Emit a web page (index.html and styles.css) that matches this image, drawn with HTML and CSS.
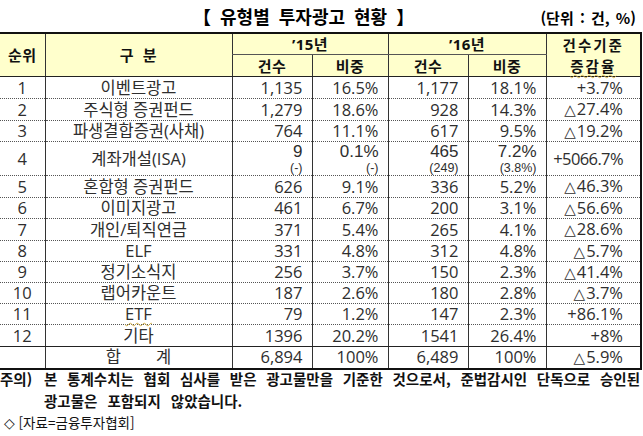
FILE: index.html
```html
<!DOCTYPE html>
<html lang="ko">
<head>
<meta charset="utf-8">
<title>유형별 투자광고 현황</title>
<link rel="stylesheet" href="styles.css">
</head>
<body>
<div class="page">
  <div class="title-bar">
    <div class="title">【 유형별 투자광고 현황 】</div>
    <div class="unit">(단위 : 건, %)</div>
  </div>
  <table class="stats">
    <colgroup>
      <col class="c-rank"><col class="c-name"><col class="c-n15"><col class="c-p15"><col class="c-n16"><col class="c-p16"><col class="c-chg">
    </colgroup>
    <thead>
      <tr class="h1">
        <th rowspan="2" class="first">순위</th>
        <th rowspan="2" class="gname">구 분</th>
        <th colspan="2" class="grp">’15년</th>
        <th colspan="2" class="grp">’16년</th>
        <th rowspan="2" class="last chg-h">건수기준<br><span class="squiggle">증감율</span></th>
      </tr>
      <tr class="h2">
        <th>건수</th><th>비중</th><th>건수</th><th>비중</th>
      </tr>
    </thead>
    <tbody>
      <tr class="r22"><td class="first">1</td><td class="name">이벤트광고</td><td>1,135</td><td>16.5%</td><td>1,177</td><td>18.1%</td><td class="last">+3.7%</td></tr>
      <tr class="r22"><td class="first">2</td><td class="name">주식형 증권펀드</td><td>1,279</td><td>18.6%</td><td>928</td><td>14.3%</td><td class="last"><span class="tri">△</span>27.4%</td></tr>
      <tr class="r21"><td class="first">3</td><td class="name">파생결합증권(사채)</td><td>764</td><td>11.1%</td><td>617</td><td>9.5%</td><td class="last"><span class="tri">△</span>19.2%</td></tr>
      <tr class="tall"><td class="first">4</td><td class="name">계좌개설(ISA)</td>
        <td class="stack"><span class="main">9</span><span class="sub">(-)</span></td>
        <td class="stack"><span class="main">0.1%</span><span class="sub">(-)</span></td>
        <td class="stack"><span class="main">465</span><span class="sub">(249)</span></td>
        <td class="stack"><span class="main">7.2%</span><span class="sub">(3.8%)</span></td>
        <td class="last tight">+5066.7%</td></tr>
      <tr class="r22"><td class="first">5</td><td class="name">혼합형 증권펀드</td><td>626</td><td>9.1%</td><td>336</td><td>5.2%</td><td class="last"><span class="tri">△</span>46.3%</td></tr>
      <tr class="r21"><td class="first">6</td><td class="name">이미지광고</td><td>461</td><td>6.7%</td><td>200</td><td>3.1%</td><td class="last"><span class="tri">△</span>56.6%</td></tr>
      <tr class="r22"><td class="first">7</td><td class="name">개인/퇴직연금</td><td>371</td><td>5.4%</td><td>265</td><td>4.1%</td><td class="last"><span class="tri">△</span>28.6%</td></tr>
      <tr class="r21"><td class="first">8</td><td class="name">ELF</td><td>331</td><td>4.8%</td><td>312</td><td>4.8%</td><td class="last"><span class="tri">△</span>5.7%</td></tr>
      <tr class="r21"><td class="first">9</td><td class="name">정기소식지</td><td>256</td><td>3.7%</td><td>150</td><td>2.3%</td><td class="last"><span class="tri">△</span>41.4%</td></tr>
      <tr class="r21"><td class="first">10</td><td class="name">랩어카운트</td><td>187</td><td>2.6%</td><td>180</td><td>2.8%</td><td class="last"><span class="tri">△</span>3.7%</td></tr>
      <tr class="r21"><td class="first">11</td><td class="name"><span class="squiggle">ETF</span></td><td>79</td><td>1.2%</td><td>147</td><td>2.3%</td><td class="last">+86.1%</td></tr>
      <tr class="r22 pre-total"><td class="first">12</td><td class="name">기타</td><td>1396</td><td>20.2%</td><td>1541</td><td>26.4%</td><td class="last">+8%</td></tr>
      <tr class="r22 total"><td class="first"></td><td class="name"><span class="spread"><span>합</span><span>계</span></span></td><td>6,894</td><td>100%</td><td>6,489</td><td>100%</td><td class="last"><span class="tri">△</span>5.9%</td></tr>
    </tbody>
  </table>
  <div class="note">
    <div class="note-label">주의)</div>
    <div class="note-body">
      <span class="line1">본 통계수치는 협회 심사를 받은 광고물만을 기준한 것으로서, 준법감시인 단독으로 승인된</span>
      <span class="line2">광고물은 포함되지 않았습니다.</span>
    </div>
  </div>
  <div class="source"><span class="diamond">◇</span> [자료=금융투자협회]</div>
</div>
</body>
</html>
```

FILE: styles.css
```css
html, body {
  margin: 0;
  padding: 0;
  background: #ffffff;
}

.page {
  width: 643px;
  height: 436px;
  overflow: hidden;
  font-family: "Open Sans", "Noto Sans CJK KR", sans-serif;
  color: #000;
}

.title-bar {
  height: 32px;
  display: flex;
  align-items: center;
}

.title {
  padding-left: 193px;
  font-size: 18px;
  font-weight: 700;
  word-spacing: 4px;
  font-family: "Noto Sans CJK KR", sans-serif;
  line-height: 1;
}

.unit {
  margin-left: auto;
  padding-right: 7px;
  font-size: 15px;
  font-weight: 700;
  word-spacing: 2px;
  font-family: "Noto Sans CJK KR", sans-serif;
  line-height: 1;
  padding-top: 3px;
}

.stats {
  border-collapse: collapse;
  table-layout: fixed;
  width: 641px;
  border-top: 2px solid #111;
  border-bottom: 2px solid #111;
  border-right: 2px solid #111;
}

.c-rank { width: 45px; }
.c-name { width: 187px; }
.c-n15 { width: 80px; }
.c-p15 { width: 76px; }
.c-n16 { width: 80px; }
.c-p16 { width: 78px; }
.c-chg { width: 95px; }

.stats th {
  background: #ffffcc;
  font-weight: 700;
  font-size: 15px;
  letter-spacing: 0.5px;
  color: #111;
  padding: 0;
  line-height: 20px;
  text-align: center;
  border-left: 1px solid #333;
  border-bottom: 1px solid #222;
  font-family: "Noto Sans CJK KR", sans-serif;
}

.stats th.first { border-left: none; }

.stats tr.h1 { height: 21px; }
.stats tr.h2 { height: 22px; }

.stats th.grp { border-bottom: 1px solid #555; font-family: "Open Sans", "Noto Sans CJK KR", sans-serif; }

.stats th.gname { word-spacing: 4px; }

.stats th.chg-h {
  font-size: 14.5px;
  letter-spacing: 2px;
  line-height: 21px;
}

.stats td {
  font-size: 16.5px;
  color: #2e2e2e;
  padding: 0 9px 0 0;
  text-align: right;
  vertical-align: middle;
  line-height: 18px;
  border-left: 1px solid #333;
  border-bottom: 1px dotted #555;
  white-space: nowrap;
}

.stats td.first {
  border-left: none;
  text-align: center;
  padding: 0;
}

.stats td.name {
  text-align: center;
  padding: 0;
}

.stats td.last {
  padding-right: 17px;
}

.stats td.tight {
  letter-spacing: -0.6px;
}

.tri {
  font-family: "DejaVu Sans", sans-serif;
  font-size: 15px;
  margin-right: 1px;
}

.stats tr.r22 { height: 22px; }
.stats tr.r21 { height: 21px; }
.stats tr.tall { height: 34px; }
.stats tr.pre-total td { border-bottom: 1px solid #222; }
.stats tr.total td { border-bottom: 2px solid #111; }

.stats td.stack {
  font-family: "Liberation Sans", "Noto Sans CJK KR", sans-serif;
  font-size: 17px;
}

.stack .main {
  display: block;
  line-height: 19px;
}

.stack .sub {
  display: block;
  font-size: 12.5px;
  line-height: 14px;
}

.squiggle {
  text-decoration: underline wavy #d6b34a;
  text-decoration-thickness: 1px;
  text-underline-offset: 2px;
}

.spread {
  display: inline-flex;
  gap: 35px;
}

.note {
  display: flex;
  font-family: "Noto Sans CJK KR", sans-serif;
  font-weight: 700;
  font-size: 14.5px;
  line-height: 22px;
  color: #111;
  margin-top: -2px;
}

.note-label {
  width: 44px;
  flex: none;
  white-space: nowrap;
}

.note-body {
  width: 596px;
}

.note-body .line1 {
  display: block;
  white-space: nowrap;
  text-align: justify;
  text-align-last: justify;
}

.note-body .line2 {
  display: block;
  word-spacing: 6px;
}

.source {
  font-family: "Noto Sans CJK KR", sans-serif;
  font-size: 13.5px;
  line-height: 20px;
  padding-left: 4px;
  color: #111;
}

.diamond {
  font-family: "DejaVu Sans", sans-serif;
  font-size: 14px;
}
```
